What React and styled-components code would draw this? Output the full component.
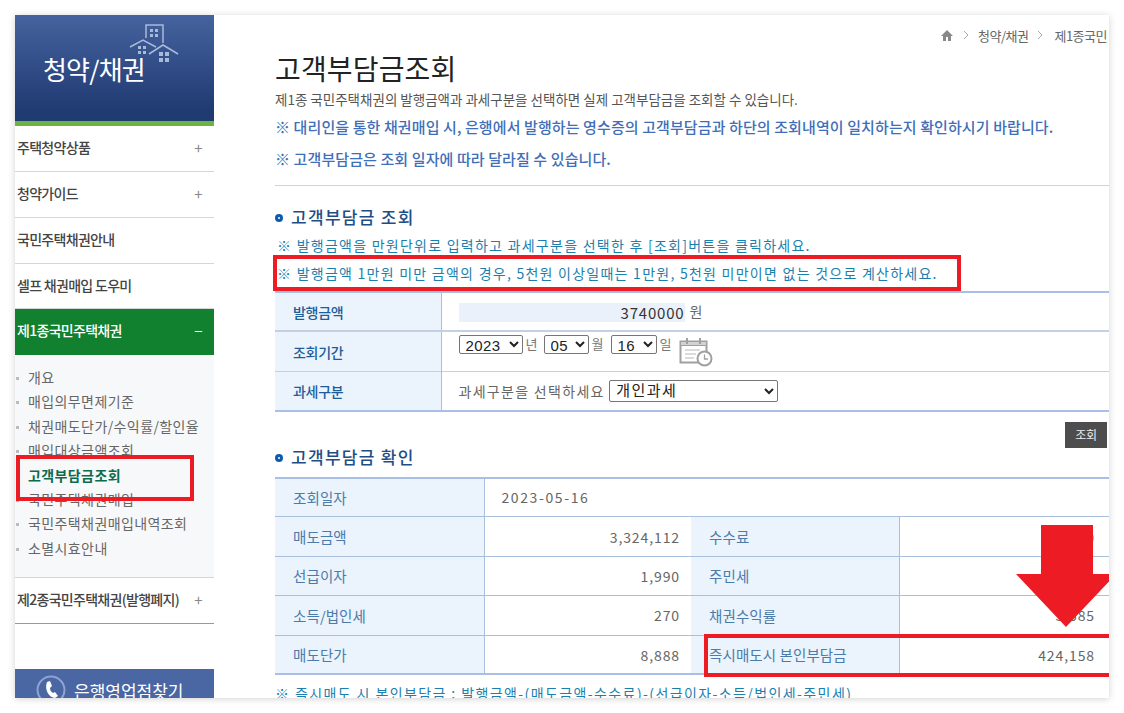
import React from "react";
import styled, { createGlobalStyle } from "styled-components";

const FONT = `"Noto Sans CJK KR", "Noto Sans", "Liberation Sans", sans-serif`;
const RED = "#ed1c24";

const GlobalStyle = createGlobalStyle`
  html, body {
    margin: 0;
    background: #fff;
    font-family: ${FONT};
    overflow: hidden;
  }
  * { box-sizing: border-box; }
`;

const Page = styled.div`
  width: 1124px;
  height: 713px;
  padding: 15px;
`;

const Card = styled.div`
  display: flex;
  width: 1094px;
  height: 683px;
  overflow: hidden;
  background: #fff;
  box-shadow: 0 1px 7px rgba(0, 0, 0, 0.18);
`;

const Side = styled.aside`
  display: flex;
  flex-direction: column;
  width: 199px;
  flex: none;
`;

const SideHead = styled.div`
  position: relative;
  height: 111px;
  flex: none;
  padding: 32px 0 0 28px;
  border-bottom: 5px solid #6cb33f;
  background: linear-gradient(#46639f, #203a72 90%);
  color: #fff;
  font-size: 26px;
  line-height: 44px;
  letter-spacing: -0.8px;
  svg {
    position: absolute;
    left: 114px;
    top: 8px;
  }
`;

const MenuItem = styled.div`
  display: flex;
  align-items: center;
  justify-content: space-between;
  flex: none;
  height: ${(p) => p.$h || 46}px;
  padding: 0 12px 3px 2px;
  border-bottom: 1px solid ${(p) => (p.$dark ? "#999" : p.$active ? "transparent" : "#d6d6d6")};
  background: ${(p) => (p.$active ? "#11802f" : "#fff")};
  color: ${(p) => (p.$active ? "#fff" : "#444")};
  font-size: 14px;
  font-weight: 500;
  letter-spacing: -0.7px;
  white-space: nowrap;
`;

const Toggle = styled.span`
  font-size: 15px;
  font-weight: 400;
  color: ${(p) => (p.$light ? "#fff" : "#888")};
`;

const SubMenu = styled.ul`
  position: relative;
  flex: none;
  height: 223px;
  margin: 0;
  padding: 10px 0 0;
  list-style: none;
  background: #f7f8f9;
  border-bottom: 1px solid #d6d6d6;
`;

const SubItem = styled.li`
  position: relative;
  height: 24.4px;
  padding-left: 13px;
  color: ${(p) => (p.$current ? "#0b6b4c" : "#666")};
  font-size: 14px;
  font-weight: ${(p) => (p.$current ? 700 : 400)};
  line-height: 24px;
  letter-spacing: 0.4px;
  white-space: nowrap;
  &::before {
    content: "";
    position: absolute;
    left: 1px;
    top: 12px;
    width: 3px;
    height: 3px;
    background: #bbb;
  }
`;

const MenuMark = styled.div`
  position: absolute;
  left: 1px;
  top: 100px;
  width: 178px;
  height: 46px;
  border: 4.5px solid ${RED};
`;

const BranchButton = styled.div`
  display: flex;
  align-items: center;
  gap: 8px;
  flex: none;
  height: 42px;
  margin-top: 45px;
  padding: 0 0 0 21px;
  background: #4a66a3;
  color: #fff;
  font-size: 17px;
  letter-spacing: 0;
  white-space: nowrap;
`;

const Main = styled.main`
  flex: 1;
  min-width: 0;
  padding: 10px 0 0 61px;
  overflow: hidden;
`;

const Crumbs = styled.div`
  display: flex;
  align-items: center;
  height: 20px;
  padding-left: 665px;
  color: #666;
  font-size: 13px;
  letter-spacing: -0.5px;
  white-space: nowrap;
  svg { flex: none; }
`;

const Title = styled.h1`
  height: 36px;
  margin: 5px 0 0;
  color: #222;
  font-size: 28px;
  font-weight: 400;
  line-height: 36px;
  letter-spacing: 0.15px;
`;

const Lead = styled.p`
  height: 18px;
  margin: 4px 0 0;
  color: #555;
  font-size: 13.5px;
  line-height: 18px;
  letter-spacing: 0;
  white-space: nowrap;
`;

const Notice = styled.p`
  height: 22px;
  margin: ${(p) => p.$gap}px 0 0;
  color: #3f6fb8;
  font-size: 15px;
  font-weight: 500;
  line-height: 22px;
  letter-spacing: 0.1px;
  white-space: nowrap;
`;

const Rule = styled.hr`
  height: 1px;
  margin: 15px 0 0;
  border: 0;
  background: #d2d2d2;
`;

const SectionTitle = styled.h2`
  display: flex;
  align-items: center;
  gap: 8px;
  height: 24px;
  margin: ${(p) => p.$gap}px 0 0;
  color: #1f4e86;
  font-size: 17px;
  font-weight: 500;
  letter-spacing: 1.3px;
  &::before {
    content: "";
    box-sizing: border-box;
    width: 8px;
    height: 8px;
    margin-top: 3px;
    border: 3px solid #0b5cad;
    border-radius: 50%;
  }
`;

const Note = styled.p`
  position: relative;
  height: 28px;
  margin: ${(p) => p.$top || 0}px 0 0;
  padding-left: 2px;
  color: #1b7fae;
  font-size: 14px;
  line-height: 28px;
  letter-spacing: 1.25px;
  white-space: nowrap;
`;

const NoteMark = styled.span`
  position: absolute;
  left: -2px;
  top: -4px;
  width: 688px;
  height: 36px;
  border: 4.5px solid ${RED};
`;

const FormTable = styled.table`
  width: 100%;
  margin-top: 4px;
  border-collapse: collapse;
  table-layout: fixed;
  border-top: 2px solid #a9bfe6;
  border-bottom: 2px solid #a9bfe6;
`;

const Row = styled.tr`
  height: ${(p) => p.$h || 39}px;
  border-top: ${(p) => p.$line || "1px solid #c3d0e4"};
`;

const Head = styled.th`
  width: ${(p) => p.$w}px;
  padding: 0 0 0 ${(p) => p.$pad || 18}px;
  background: #ebf3fc;
  border-right: 1px solid #a9c0dc;
  color: ${(p) => p.$color || "#2a5f9e"};
  font-size: ${(p) => p.$size || 14}px;
  font-weight: ${(p) => p.$weight || 500};
  text-align: left;
  letter-spacing: ${(p) => p.$ls ?? -0.3}px;
  white-space: nowrap;
`;

const Cell = styled.td`
  padding: 0 0 0 17px;
  vertical-align: ${(p) => p.$align || "middle"};
  color: #666;
  font-size: 14px;
  letter-spacing: 1.3px;
  white-space: nowrap;
`;

const Amount = styled.input`
  width: 226px;
  height: 19px;
  margin-right: 5px;
  padding: 0;
  border: 0;
  background: #ebf1fb;
  color: #333;
  font: 15px ${FONT};
  letter-spacing: 0.8px;
  text-align: right;
  vertical-align: middle;
`;

const DateLine = styled.div`
  display: flex;
  align-items: flex-start;
  padding-top: 3px;
  height: 39px;
  color: #777;
  font-size: 13px;
  letter-spacing: 0;
  line-height: 18px;
`;

const Picker = styled.select`
  width: ${(p) => p.$w}px;
  height: ${(p) => p.$h || 19}px;
  padding: 0 0 0 2px;
  border: 1px solid #767676;
  border-radius: 2px;
  background-color: #fff;
  color: #222;
  font: 15px "Liberation Sans", ${FONT};
  letter-spacing: ${(p) => p.$ls ?? 0.4}px;
`;

const DateUnit = styled.span`
  width: ${(p) => p.$w}px;
  padding-left: 3px;
  flex: none;
`;

const CalendarIcon = styled.svg`
  flex: none;
`;

const ButtonRow = styled.div`
  display: flex;
  justify-content: flex-end;
  margin: 10px 2px -4px 0;
`;

const SearchButton = styled.button`
  width: 42px;
  height: 26px;
  padding: 0;
  border: 0;
  background: #4d4d4d;
  color: #eee;
  font: 12px ${FONT};
  letter-spacing: -0.3px;
`;

const ResultWrap = styled.div`
  position: relative;
  margin-top: 8px;
`;

const ResultTable = styled.table`
  width: 100%;
  border-collapse: collapse;
  table-layout: fixed;
  border-top: 2px solid #a9bfe6;
  border-bottom: 2px solid #a9bfe6;
`;

const ResultRow = styled.tr`
  height: 39.4px;
  border-top: 1px solid #a9c0dc;
`;

const Value = styled.td`
  padding: 0 ${(p) => (p.$last ? 14 : 11)}px 0 0;
  color: #666;
  font-size: 14px;
  text-align: right;
  letter-spacing: 0.9px;
  white-space: nowrap;
`;

const DateValue = styled.td`
  padding-left: 17px;
  color: #666;
  font-size: 14px;
  letter-spacing: 1.6px;
`;

const ResultMark = styled.div`
  position: absolute;
  right: -4px;
  bottom: -2px;
  width: 409px;
  height: 43px;
  border: 4.5px solid ${RED};
`;

const Arrow = styled.svg`
  position: absolute;
  left: 741px;
  top: 48px;
`;

const Footnote = styled.p`
  margin: 9px 0 0;
  color: #1b7fae;
  font-size: 14px;
  line-height: 18px;
  letter-spacing: 1.4px;
  white-space: nowrap;
`;

const CrumbArrow = ({ w = 24 }) => (
  <svg width={w} height="12" viewBox={`0 0 ${w} 12`}>
    <path d="M10 2l4 4-4 4" fill="none" stroke="#aaa" strokeWidth="1" />
  </svg>
);

const Houses = () => (
  <svg width="52" height="42" viewBox="0 0 52 42" fill="none" stroke="#a9b9d8" strokeWidth="1.5">
    <path d="M17 15V2h17v18" />
    <path d="M1 24L14 17l13 7M20 31L34 22l15 9" />
    <g fill="#a9b9d8" stroke="none">
      <rect x="21" y="6" width="3" height="3" />
      <rect x="26" y="6" width="3" height="3" />
      <rect x="21" y="11" width="3" height="3" />
      <rect x="26" y="11" width="3" height="3" />
      <rect x="9" y="23" width="3" height="3" />
      <rect x="14" y="23" width="3" height="3" />
      <rect x="9" y="28" width="3" height="3" />
      <rect x="14" y="28" width="3" height="3" />
      <rect x="30" y="29" width="4" height="4" />
      <rect x="36" y="29" width="4" height="4" />
      <rect x="30" y="35" width="4" height="4" />
      <rect x="36" y="35" width="4" height="4" />
    </g>
  </svg>
);

const PhoneBadge = () => (
  <svg width="30" height="30" viewBox="0 0 30 30">
    <circle cx="15" cy="15" r="13.5" fill="none" stroke="#8ea3cf" strokeWidth="2" />
    <path d="M11 7l3-1 2 5-2 2c0 2 1 4 3 5l2-1 3 4-3 2c-6 0-11-9-8-16z" fill="#fff" />
  </svg>
);

const subItems = [
  "개요",
  "매입의무면제기준",
  "채권매도단가/수익률/할인율",
  "매입대상금액조회",
  "고객부담금조회",
  "국민주택채권매입",
  "국민주택채권매입내역조회",
  "소멸시효안내",
];

const results = [
  ["매도금액", "3,324,112", "수수료", "9,970"],
  ["선급이자", "1,990", "주민세", "20"],
  ["소득/법인세", "270", "채권수익률", "3.585"],
  ["매도단가", "8,888", "즉시매도시 본인부담금", "424,158"],
];

const LABEL = { $weight: 400, $color: "#4a7bab", $size: 14.5, $ls: 0.1 };

export default function App() {
  return (
    <Page>
      <GlobalStyle />
      <Card>
        <Side>
          <SideHead>
            <Houses />
            청약/채권
          </SideHead>
          <MenuItem><span>주택청약상품</span><Toggle>+</Toggle></MenuItem>
          <MenuItem><span>청약가이드</span><Toggle>+</Toggle></MenuItem>
          <MenuItem><span>국민주택채권안내</span></MenuItem>
          <MenuItem $h={45}><span>셀프 채권매입 도우미</span></MenuItem>
          <MenuItem $active><span>제1종국민주택채권</span><Toggle $light>−</Toggle></MenuItem>
          <SubMenu>
            {subItems.map((item) => (
              <SubItem key={item} $current={item === "고객부담금조회"}>{item}</SubItem>
            ))}
            <MenuMark />
          </SubMenu>
          <MenuItem $dark><span>제2종국민주택채권(발행폐지)</span><Toggle>+</Toggle></MenuItem>
          <BranchButton><PhoneBadge />은행영업점찾기</BranchButton>
        </Side>
        <Main>
          <Crumbs>
            <svg width="14" height="13" viewBox="0 0 14 13">
              <path d="M7 1L1 7h2v5h3V8h2v4h3V7h2z" fill="#888" />
            </svg>
            <CrumbArrow />
            청약/채권
            <CrumbArrow w={26} />
            제1종국민
          </Crumbs>
          <Title>고객부담금조회</Title>
          <Lead>제1종 국민주택채권의 발행금액과 과세구분을 선택하면 실제 고객부담금을 조회할 수 있습니다.</Lead>
          <Notice $gap={8}>※ 대리인을 통한 채권매입 시, 은행에서 발행하는 영수증의 고객부담금과 하단의 조회내역이 일치하는지 확인하시기 바랍니다.</Notice>
          <Notice $gap={10}>※ 고객부담금은 조회 일자에 따라 달라질 수 있습니다.</Notice>
          <Rule />
          <SectionTitle $gap={18}>고객부담금 조회</SectionTitle>
          <Note $top={3}>※ 발행금액을 만원단위로 입력하고 과세구분을 선택한 후 [조회]버튼을 클릭하세요.</Note>
          <Note>
            ※ 발행금액 1만원 미만 금액의 경우, 5천원 이상일때는 1만원, 5천원 미만이면 없는 것으로 계산하세요.
            <NoteMark />
          </Note>
          <FormTable>
            <tbody>
              <Row $line="none">
                <Head $w={166} $color="#1d5d9b">발행금액</Head>
                <Cell><Amount readOnly value="3740000" />원</Cell>
              </Row>
              <Row $line="2px solid #c3d0e4" $h={39}>
                <Head $color="#1d5d9b">조회기간</Head>
                <Cell $align="top">
                  <DateLine>
                    <Picker $w={64} defaultValue="2023"><option>2023</option></Picker>
                    <DateUnit $w={21}>년</DateUnit>
                    <Picker $w={45} defaultValue="05"><option>05</option></Picker>
                    <DateUnit $w={22}>월</DateUnit>
                    <Picker $w={46} defaultValue="16"><option>16</option></Picker>
                    <DateUnit $w={22}>일</DateUnit>
                    <CalendarIcon width="34" height="32" viewBox="0 0 34 32" fill="none" stroke="#a0a0a0">
                      <path d="M1.5 6.5h26v21h-26z" strokeWidth="2" />
                      <path d="M1.5 6.5h26v4h-26z" fill="#d2d2d2" strokeWidth="1" />
                      <path d="M8 3v6M21 3v6" strokeWidth="2" />
                      <path d="M6 15h15M6 19h11M6 23h9" stroke="#cfcfcf" strokeWidth="1.5" />
                      <circle cx="25.5" cy="23.5" r="7" fill="#fff" strokeWidth="2" />
                      <path d="M25.5 19.5v4.5h3.5" strokeWidth="1.3" />
                    </CalendarIcon>
                  </DateLine>
                </Cell>
              </Row>
              <Row>
                <Head $color="#1d5d9b">과세구분</Head>
                <Cell>
                  과세구분을 선택하세요{" "}
                  <Picker $w={169} $h={22} $ls={1.5} defaultValue="개인과세"><option>개인과세</option></Picker>
                </Cell>
              </Row>
            </tbody>
          </FormTable>
          <ButtonRow><SearchButton>조회</SearchButton></ButtonRow>
          <SectionTitle $gap={1}>고객부담금 확인</SectionTitle>
          <ResultWrap>
            <ResultTable>
              <colgroup>
                <col style={{ width: 209 }} />
                <col style={{ width: 207 }} />
                <col style={{ width: 208 }} />
                <col />
              </colgroup>
              <tbody>
                <ResultRow>
                  <Head {...LABEL}>조회일자</Head>
                  <DateValue colSpan={3}>2023-05-16</DateValue>
                </ResultRow>
                {results.map(([a, b, c, d]) => (
                  <ResultRow key={a}>
                    <Head {...LABEL}>{a}</Head>
                    <Value>{b}</Value>
                    <Head {...LABEL}>{c}</Head>
                    <Value $last>{d}</Value>
                  </ResultRow>
                ))}
              </tbody>
            </ResultTable>
            <ResultMark />
            <Arrow width="100" height="102" viewBox="0 0 100 102">
              <path d="M25 0h52v49h23L50 102 0 49h25z" fill={RED} />
            </Arrow>
          </ResultWrap>
          <Footnote>※ 즉시매도 시 본인부담금 : 발행금액-(매도금액-수수료)-(선급이자-소득/법인세-주민세)</Footnote>
        </Main>
      </Card>
    </Page>
  );
}
